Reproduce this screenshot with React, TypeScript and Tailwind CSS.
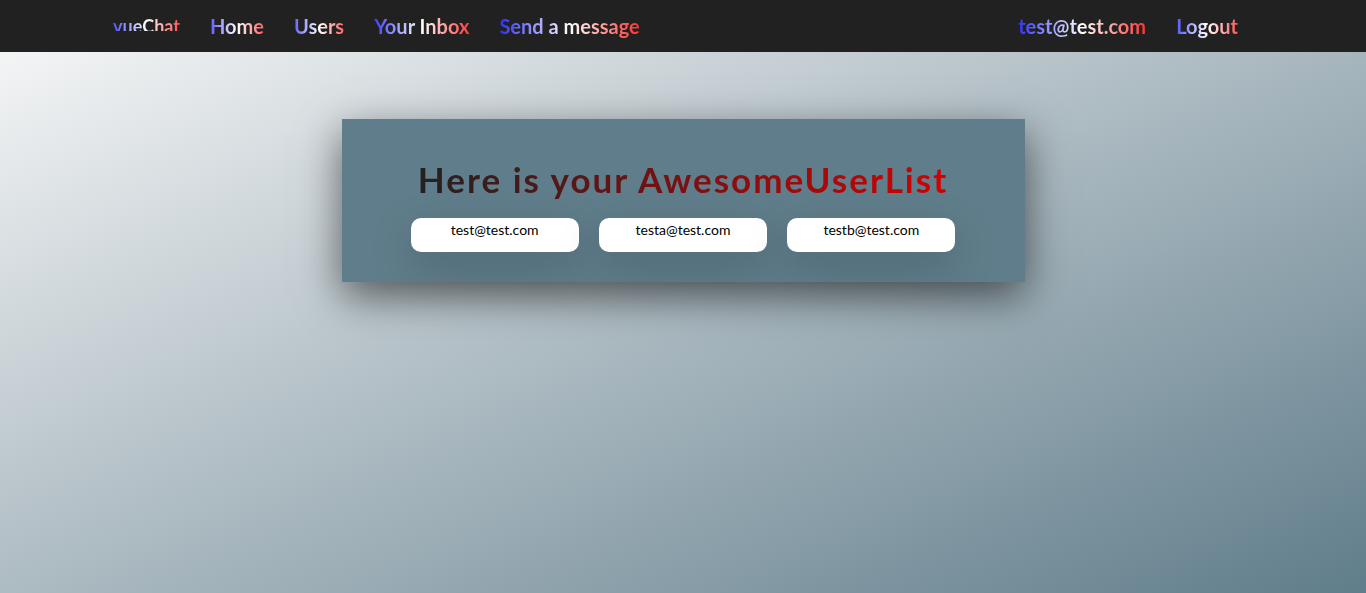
const navLink =
  'bg-linear-to-r/srgb from-[#0000ff] via-white to-[#ff0000] bg-clip-text px-[15px] leading-[30px] text-transparent hover:underline';

const leftLinks = ['Home', 'Users', 'Your Inbox', 'Send a message'];
const rightLinks = ['test@test.com', 'Logout'];
const users = ['test@test.com', 'testa@test.com', 'testb@test.com'];

function NavItem({ label }: { label: string }) {
  return (
    <a href="#" className={`text-xl ${navLink}`}>
      {label}
    </a>
  );
}

export default function App() {
  return (
    <div className="flex min-h-screen flex-col bg-linear-to-br/srgb from-[#fafafa] via-[#adbbc2] to-[#607d8b] font-['Lato',sans-serif] text-black">
      <nav className="flex min-h-13 flex-wrap justify-between bg-[#212121] pt-[11px] pr-[113px] pl-[98px] font-bold">
        <div className="flex items-start">
          <a href="#" className={`h-5 text-lg ${navLink}`}>
            vueChat
          </a>
          {leftLinks.map((label) => (
            <NavItem key={label} label={label} />
          ))}
        </div>
        <div className="flex items-start">
          {rightLinks.map((label) => (
            <NavItem key={label} label={label} />
          ))}
        </div>
      </nav>

      <main className="pt-[67px]">
        <section className="mx-auto w-1/2 min-w-[640px] bg-[#607d8b] px-[69px] pt-[34px] pb-[30px] shadow-[0_14px_40px_rgba(0,0,0,0.57)]">
          <h1 className="mb-3 bg-linear-to-r/srgb from-[#212121] to-[#d50000] bg-clip-text text-center text-[35px] leading-[53px] font-bold tracking-[2px] text-transparent">
            Here is your AwesomeUserList
          </h1>
          <ul className="grid grid-cols-3 gap-5">
            {users.map((user) => (
              <li
                key={user}
                className="h-[34px] rounded-[10px] bg-white text-center text-sm leading-6 shadow-[0_15px_45px_rgba(0,0,0,0.18)]"
              >
                {user}
              </li>
            ))}
          </ul>
        </section>
      </main>
    </div>
  );
}
